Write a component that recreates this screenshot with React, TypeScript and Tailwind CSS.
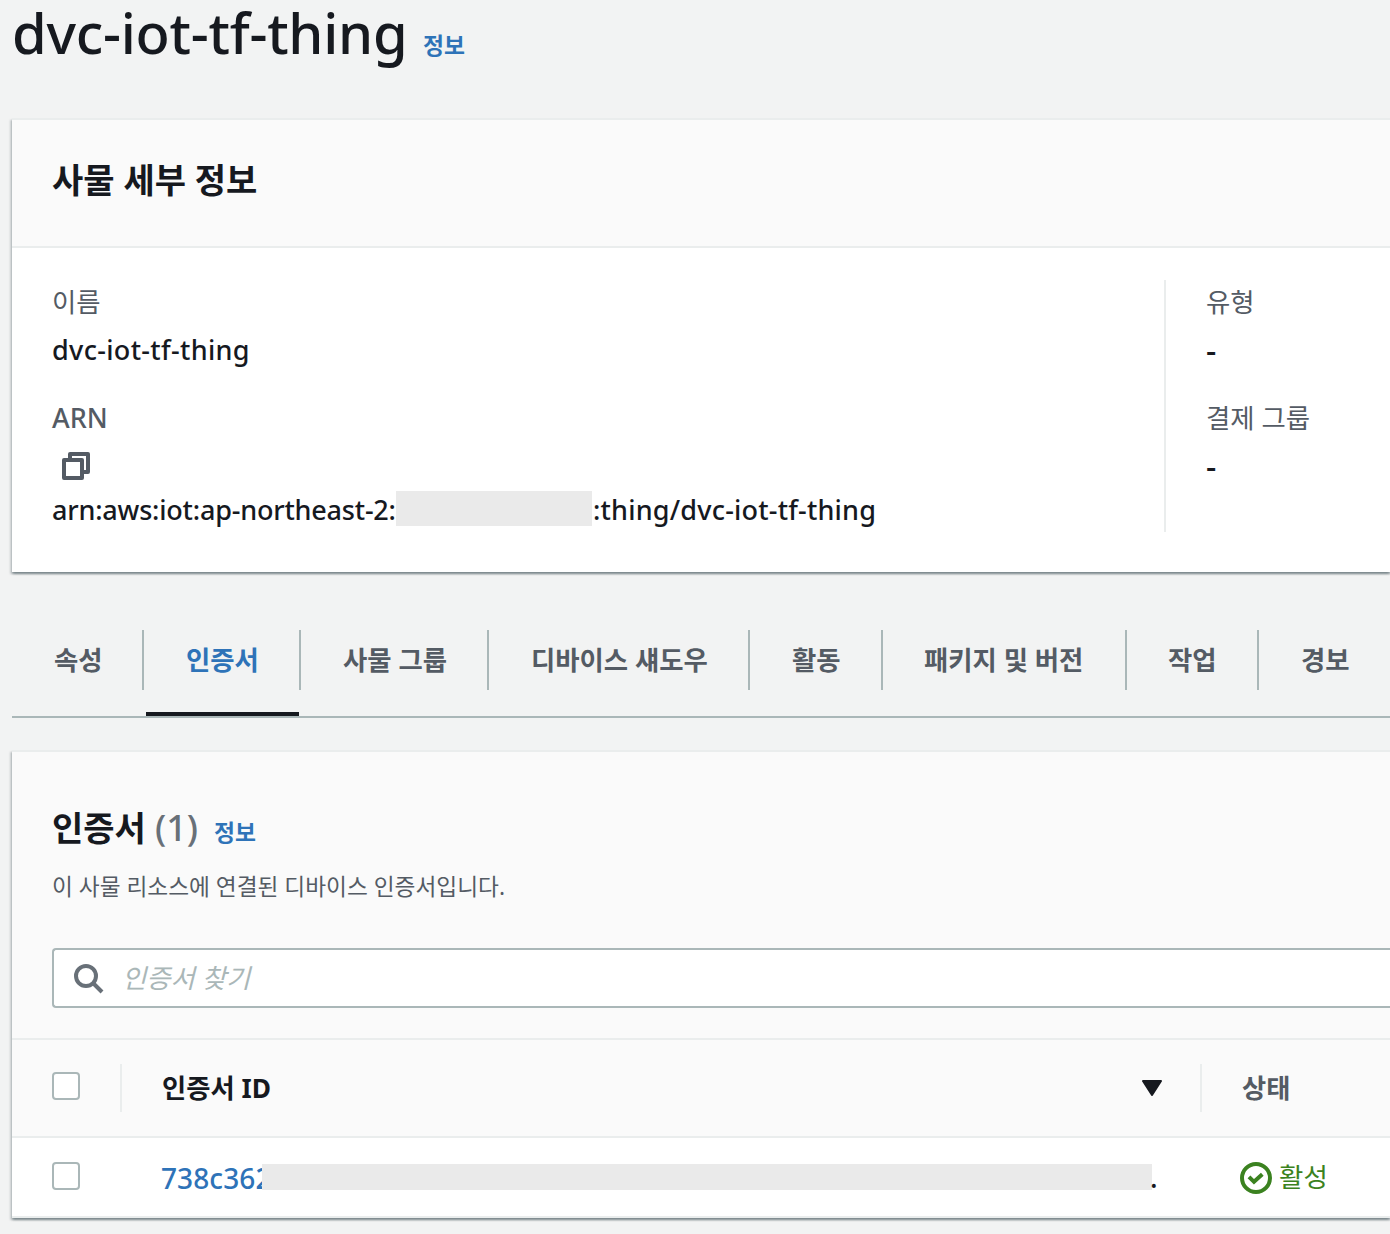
import type { ReactNode } from "react";

const TABS = [
  { label: "속성", cell: "w-[132px] pl-[42px]" },
  { label: "인증서", cell: "w-[157px] pl-[42px]", active: true },
  { label: "사물 그룹", cell: "w-[188px] pl-[42px]" },
  { label: "디바이스 섀도우", cell: "w-[261px] pl-[42px]" },
  { label: "활동", cell: "w-[133px] pl-[42px]" },
  { label: "패키지 및 버전", cell: "w-[244px] pl-[41px]" },
  { label: "작업", cell: "w-[132px] pl-[41px]" },
  { label: "경보", cell: "w-[131px] pl-[42px]", last: true },
];

function Panel({ children, className = "" }: { children: ReactNode; className?: string }) {
  return (
    <section
      className={`border-t-2 border-[#eaeded] bg-white shadow-[0_2px_2px_0_rgba(0,28,36,0.3),2px_2px_2px_0_rgba(0,28,36,0.15),-2px_2px_2px_0_rgba(0,28,36,0.15)] ${className}`}
    >
      {children}
    </section>
  );
}

function InfoLink() {
  return (
    <a href="#" className="text-[22.8px] font-bold text-[#2e73b8]">
      정보
    </a>
  );
}

function FieldLabel({ children }: { children: ReactNode }) {
  return <dt className="h-11 text-[26.4px] leading-[44px] text-[#545b64]">{children}</dt>;
}

function EmptyValue() {
  return <dd className="h-[72px] pt-1 text-[32px] leading-[44px] font-medium">-</dd>;
}

function Checkbox() {
  return <span className="block size-7 rounded-[4px] border-2 border-[#aab7b8] bg-white" />;
}

function CopyIcon() {
  return (
    <svg viewBox="0 0 28 28" className="size-7" fill="none" stroke="#545b64" strokeWidth="4" strokeLinejoin="round">
      <path d="M2 8h18v18H2z" />
      <path d="M8 8V2h18v18h-6" />
    </svg>
  );
}

function SearchIcon() {
  return (
    <svg viewBox="0 0 30 30" className="size-[30px]" fill="none" stroke="#687078" strokeWidth="4">
      <circle cx="12" cy="12" r="10" />
      <path d="M19 19l9 9" />
    </svg>
  );
}

function StatusIcon() {
  return (
    <svg viewBox="0 0 32 32" className="size-8" fill="none" stroke="#3b8220" strokeWidth="4">
      <circle cx="16" cy="16" r="14" />
      <path d="M9 14.8l5 5 8.3-7.6" />
    </svg>
  );
}

export default function App() {
  return (
    <main className="h-[1234px] w-[1390px] overflow-hidden bg-[#f2f3f3] pl-3 font-['Noto_Sans','Noto_Sans_CJK_KR',sans-serif] text-[#16191f]">
      <header className="flex h-[118px] items-baseline whitespace-nowrap">
        <h1 className="w-[411px] text-[56px] leading-[64px] font-medium tracking-[-0.25px]">
          dvc-iot-tf-thing
        </h1>
        <InfoLink />
      </header>

      <Panel className="h-[454px]">
        <div className="flex h-32 items-center border-b-2 border-[#eaeded] bg-[#fafafa] pl-10">
          <h2 className="pb-[7px] text-[34px] leading-[44px] font-bold">사물 세부 정보</h2>
        </div>
        <div className="flex pt-8">
          <dl className="h-[252px] w-[1152px] pl-10">
            <FieldLabel>이름</FieldLabel>
            <dd className="h-[72px] pt-1 text-[27px] leading-[44px] font-medium tracking-[0.33px]">
              dvc-iot-tf-thing
            </dd>
            <FieldLabel>
              <span className="text-[27px] font-medium">ARN</span>
            </FieldLabel>
            <dd>
              <div className="pt-3 pl-[10px]">
                <CopyIcon />
              </div>
              <div className="flex items-center pt-2 text-[27px] leading-[44px] font-medium whitespace-nowrap">
                <span className="w-[344px] tracking-[-0.2px]">arn:aws:iot:ap-northeast-2:</span>
                <span className="mb-1 h-[35px] w-[196px] bg-[#eaeaea]" />
                <span className="pl-px tracking-[0.2px]">:thing/dvc-iot-tf-thing</span>
              </div>
            </dd>
          </dl>
          <dl className="h-[252px] border-l-2 border-[#eaeded] pl-10">
            <FieldLabel>유형</FieldLabel>
            <EmptyValue />
            <FieldLabel>결제 그룹</FieldLabel>
            <EmptyValue />
          </dl>
        </div>
      </Panel>

      <nav className="mt-[58px] flex h-[88px] border-b-2 border-[#aab7b8] text-[26.4px] font-bold whitespace-nowrap text-[#545b64]">
        {TABS.map((t) => (
          <div
            key={t.label}
            className={`relative h-[60px] shrink-0 leading-[60px] ${t.cell} ${t.last ? "" : "border-r-2 border-[#aab7b8]"} ${t.active ? "text-[#2e73b8]" : ""}`}
          >
            {t.label}
            {t.active && <span className="absolute top-[82px] right-0 left-[2px] h-1 bg-[#16191f]" />}
          </div>
        ))}
      </nav>

      <Panel className="mt-8 h-[468px]">
        <div className="h-72 border-b-2 border-[#eaeded] bg-[#fafafa] pt-[52px] pl-10">
          <div className="flex h-12 items-baseline whitespace-nowrap">
            <h2 className="w-[103px] text-[34px] leading-[47px] font-bold">인증서</h2>
            <span className="w-[59px] text-[36px] leading-[47px] font-medium text-[#687078]">(1)</span>
            <InfoLink />
          </div>
          <p className="pt-3 text-[22.7px] leading-[45px] text-[#545b64]">
            이 사물 리소스에 연결된 디바이스 인증서입니다.
          </p>
          <div className="mt-[39px] flex h-[60px] items-center rounded-l-[4px] border-2 border-r-0 border-[#aab7b8] bg-white pl-5">
            <div className="pt-px">
              <SearchIcon />
            </div>
            <span className="ml-[18px] text-[26.4px] leading-[44px] text-[#aab7b8] italic">인증서 찾기</span>
          </div>
        </div>
        <div className="flex h-[98px] items-center border-b-2 border-[#eaeded] bg-[#fafafa] pl-10 text-[26.3px] font-bold">
          <div className="flex h-12 w-[70px] items-center border-r-2 border-[#eaeded] pb-1">
            <Checkbox />
          </div>
          <div className="flex h-12 w-[1080px] items-center justify-between border-r-2 border-[#eaeded] pr-[38px] pl-10">
            <span className="pt-px">인증서 ID</span>
            <svg viewBox="0 0 20 16" className="h-4 w-5" fill="#16191f" stroke="#16191f" strokeWidth="2" strokeLinejoin="round">
              <path d="M1 1h18l-9 14z" />
            </svg>
          </div>
          <span className="pt-px pl-10 text-[#545b64]">상태</span>
        </div>
        <div className="flex h-20 items-center border-b-2 border-[#eaeded] pl-10">
          <div className="w-[108px] pb-[2px]">
            <Checkbox />
          </div>
          <div className="flex w-[1080px] items-center text-[28px] leading-[44px]">
            <a href="#" className="w-[102px] overflow-hidden pt-px pl-px font-medium tracking-[0.1px] whitespace-nowrap text-[#2e73b8]">
              738c362
            </a>
            <span className="h-[26px] w-[890px] bg-[#eaeaea]" />
            <span className="-ml-[2px] font-medium">.</span>
          </div>
          <div className="flex items-center gap-[7px] pt-px text-[26.5px] text-[#3b8220]">
            <StatusIcon />
            <span className="pt-px">활성</span>
          </div>
        </div>
      </Panel>
    </main>
  );
}
